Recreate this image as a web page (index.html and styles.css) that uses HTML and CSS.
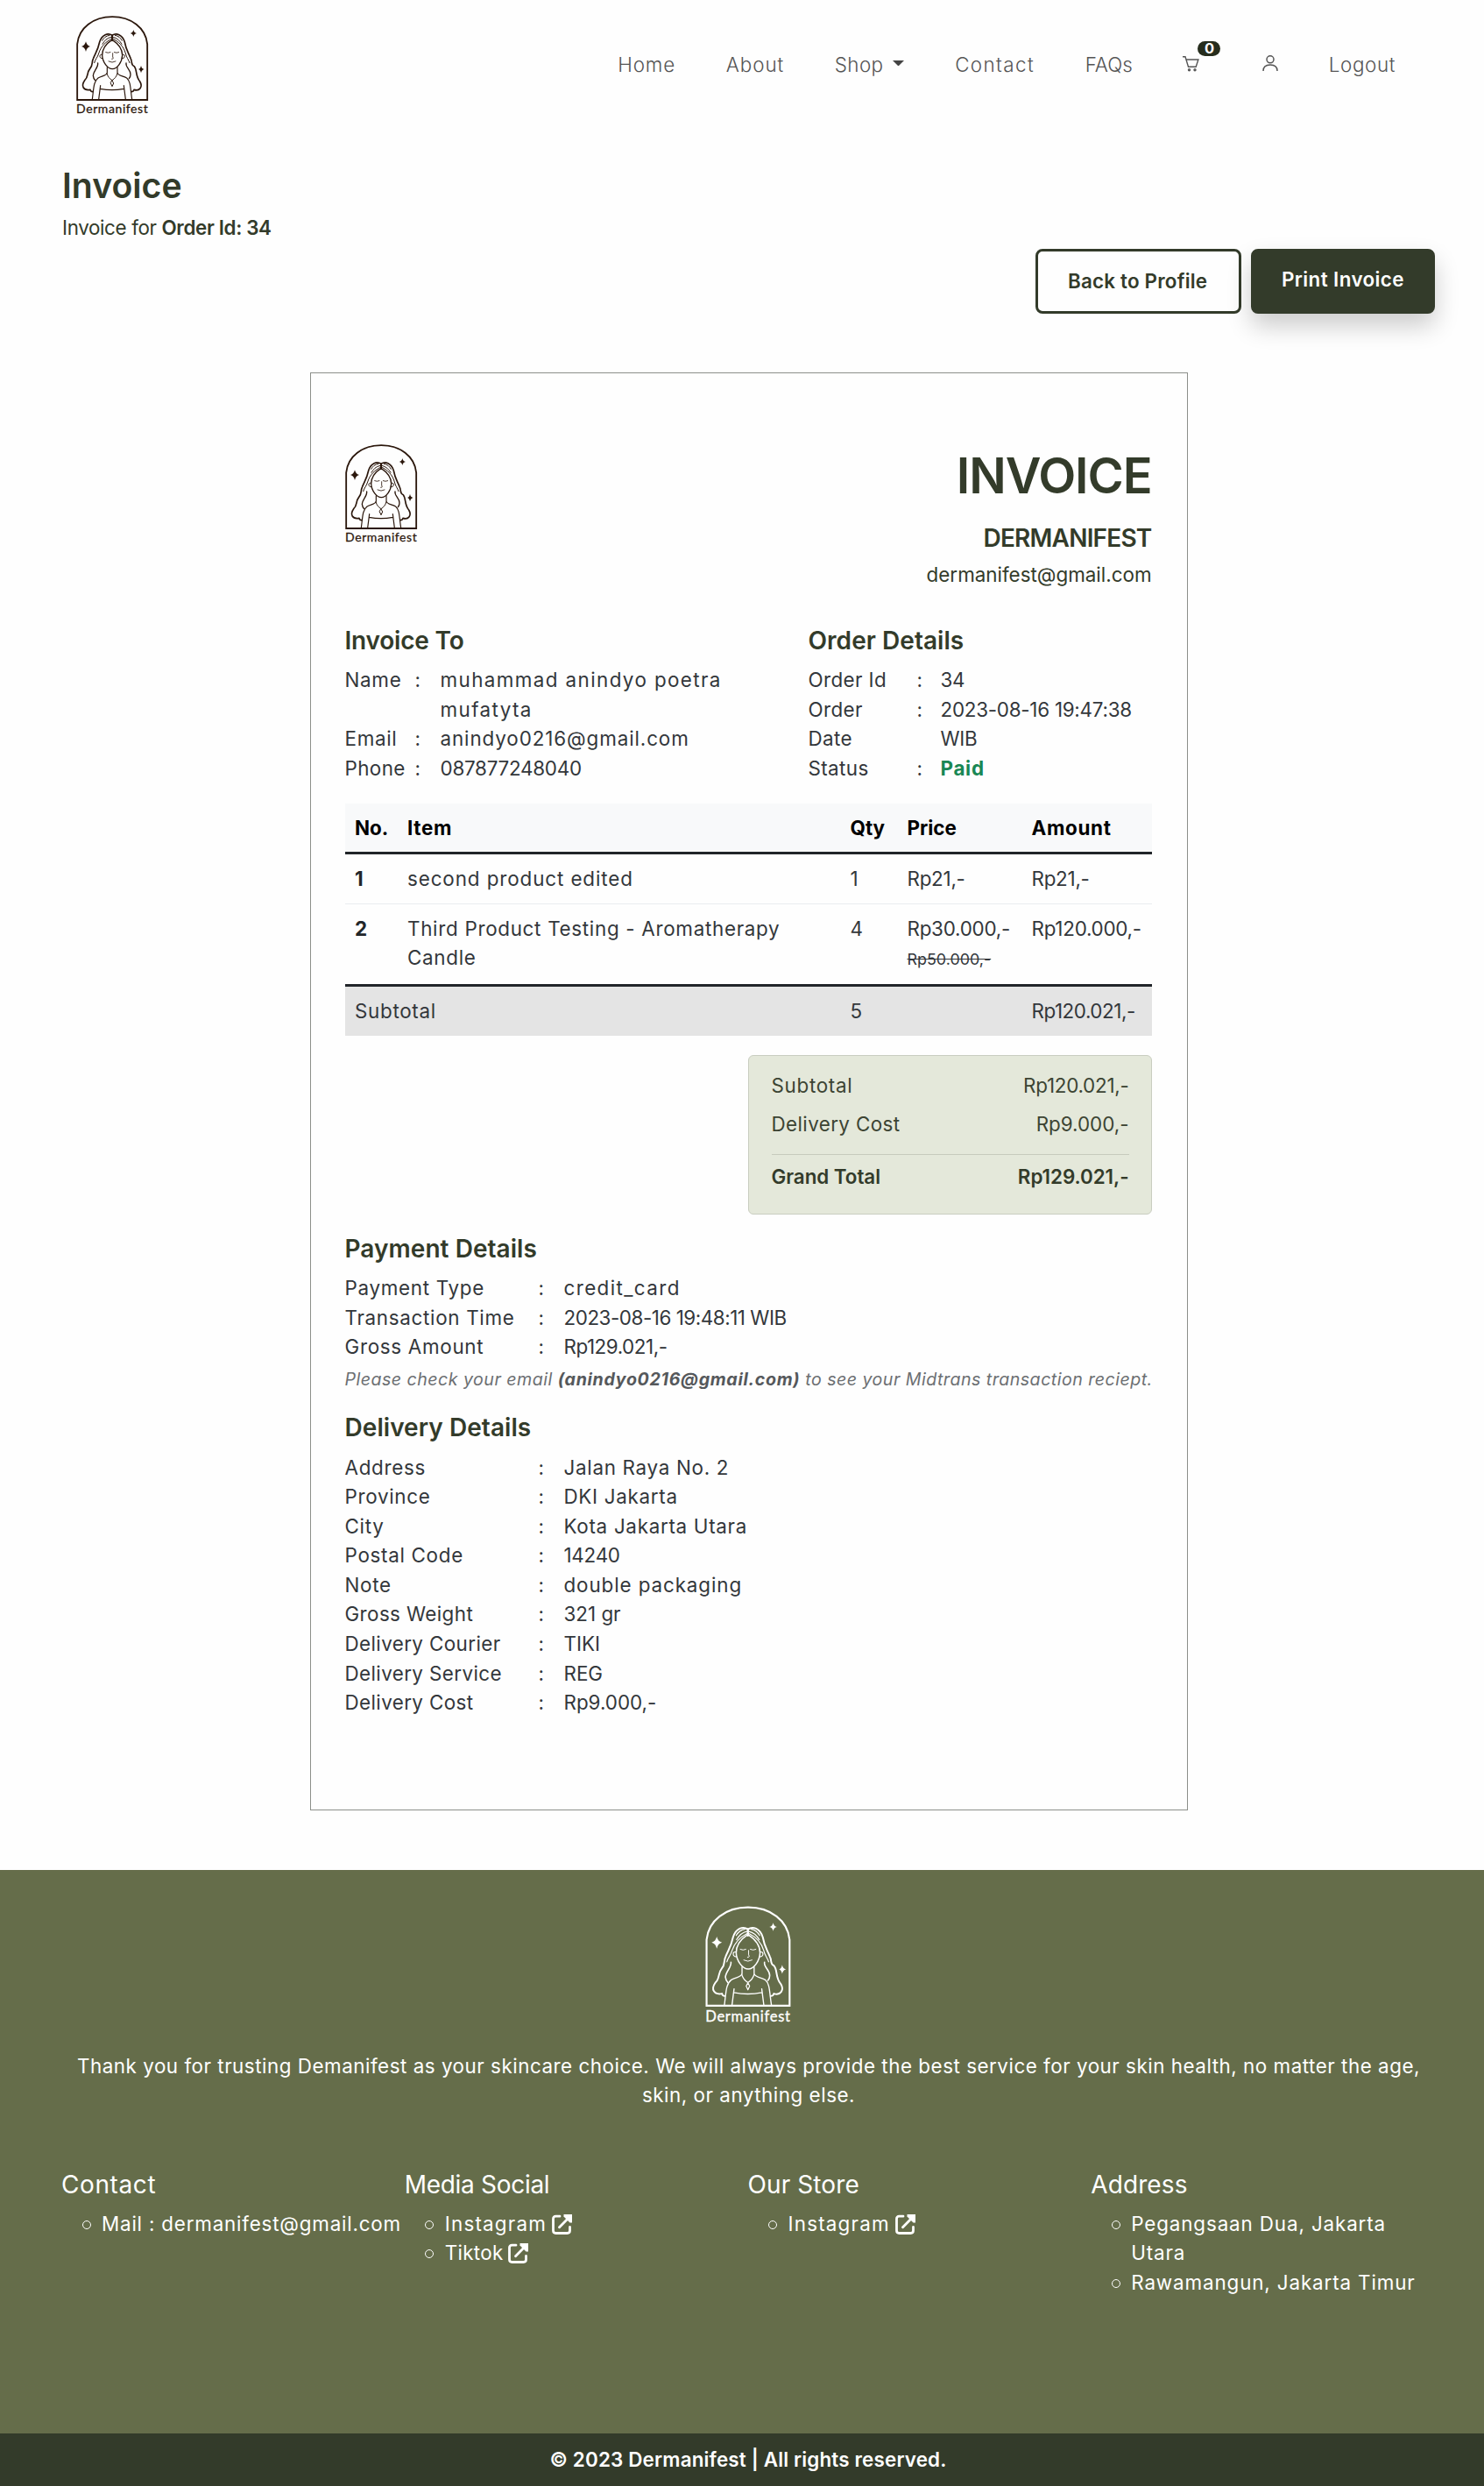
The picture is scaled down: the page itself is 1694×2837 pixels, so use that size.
FILE: index.html
```html
<!DOCTYPE html>
<html lang="en">
<head>
<meta charset="utf-8">
<title>Invoice - Dermanifest</title>
<link rel="stylesheet" href="styles.css">
</head>
<body>
<svg class="defs" width="0" height="0" aria-hidden="true">
  <symbol id="logo" viewBox="80 52 252 345">
    <g fill="none" stroke="currentColor" stroke-linecap="round" stroke-linejoin="round">
      <path stroke-width="5.500" stroke-linejoin="miter" d="M86.500 343V152C92 96 142 58.500 206.500 58.500S321 96 326.500 152V343Z"/>
      <path stroke-width="5" d="M206 122C192 112 171 119 163 145C157 173 150 180 142 200C134 216 142 222 130 236C118 250 126 264 112 276C98 296 108 312 131 308C132 312 135 315 139 315"/>
      <path stroke-width="5" d="M206 122C220 112 241 119 249 145C254 173 262 182 269 200C277 214 268 222 282 228C292 240 285 262 301 280C312 298 300 314 281 308C280 312 277 315 272 315"/>
      <path stroke-width="4" d="M206 137C186 150 172 166 172 190C173 214 191 237 207 237S240 214 241 190C241 166 226 150 206 137"/>
      <path stroke-width="6" d="M206 122V140"/>
      <path stroke-width="3" d="M203 128C188 131 180 140 173 152M204 134C186 143 168 158 160 184C156 198 148 204 145 216M209 128C223 131 232 140 239 152M209 134C227 143 245 158 252 184C255 198 262 204 266 216M197 122C184 124 178 130 172 140M216 122C228 124 234 130 240 140"/>
      <path stroke-width="4" d="M157 217C159 232 142 244 141 260Q142 270 148 276M254 217C251 232 269 238 269 256Q269 264 264 270"/>
      <path stroke-width="3" d="M172 188C160 184 161 203 173 201M241 188C253 184 252 203 240 201"/>
      <path stroke-width="3.500" d="M189 231V250C188 260 172 260 158 268C142 280 143 304 138 341M224 231V250C225 260 241 260 256 268C270 280 268 304 274 341"/>
      <path stroke-width="3.500" d="M166 294L160 341M246 294L252 341M165 305Q206 313 246 305"/>
      <path stroke-width="3" d="M188 252C191 264 198 271 206 276C214 271 221 264 224 252M206 277L211 286L206 297L201 286Z"/>
      <path stroke-width="2.500" d="M184 180Q192 184 200 180M213 180Q221 184 229 180M208 183V196Q213 203 205 203M194 211Q206 218 218 211"/>
    </g>
    <path fill="currentColor" d="M116 143Q119 157 131 160Q119 163 116 178Q113 163 101 160Q113 157 116 143ZM279 103Q281 113 290 115Q281 117 279 127Q277 117 268 115Q277 113 279 103ZM305 225Q307 236 316 238Q307 240 305 251Q303 240 296 238Q303 236 305 225Z"/>
    <text x="83" y="389" textLength="246" font-family="Lato, sans-serif" font-size="42" font-weight="400" fill="currentColor" stroke="currentColor" stroke-width=".8">Dermanifest</text>
  </symbol>
  <symbol id="external" viewBox="0 0 23 23">
    <path fill="none" stroke="currentColor" stroke-width="2.800" stroke-linecap="round" d="M9 2.200H4.500Q1.500 2.200 1.500 5V18.500Q1.500 21.500 4.500 21.500H17.500Q20.500 21.500 20.500 18.500V14.500M8.500 14.800L19.500 3.500"/>
    <path fill="currentColor" d="M13.500 0H23V9.500H20.500L13.500 2.500Z"/>
  </symbol>
</svg>

<header class="navbar">
  <svg class="logo brand"><use href="#logo"/></svg>
  <nav class="menu">
    <a class="ls-wide">Home</a>
    <a class="ls-wide">About</a>
    <a class="ls-mid shop">Shop<i class="caret"></i></a>
    <a class="ls-wider">Contact</a>
    <a class="ls-none">FAQs</a>
    <a class="cart">
      <svg width="19" height="18" viewBox="0 0 19 18" fill="none" stroke="currentColor" stroke-width="1.400"><path d="M0 .8H3L6.500 12.200H15.200L17.900 4H4.200"/><circle cx="7.500" cy="15.800" r="1"/><circle cx="14" cy="15.800" r="1"/></svg>
      <span class="badge">0</span>
    </a>
    <a class="user"><svg width="18" height="18" viewBox="0 0 18 18" fill="none" stroke="currentColor" stroke-width="1.500"><circle cx="9" cy="4.800" r="4"/><path d="M1 18C1 13.500 4.200 11 9 11S17 13.500 17 18"/></svg></a>
    <a class="ls-mid">Logout</a>
  </nav>
</header>

<main class="container">
  <h1 class="page-title">Invoice</h1>
  <p class="page-sub">Invoice for <b>Order Id: 34</b></p>
  <div class="actions">
    <a class="btn btn-outline">Back to Profile</a>
    <a class="btn btn-solid">Print Invoice</a>
  </div>

  <section class="invoice">
    <div class="invoice-head">
      <svg class="logo"><use href="#logo"/></svg>
      <div class="issuer">
        <h2>INVOICE</h2>
        <h3>DERMANIFEST</h3>
        <p>dermanifest@gmail.com</p>
      </div>
    </div>

    <div class="parties">
      <div>
        <h4 class="ls-tight">Invoice To</h4>
        <dl class="rows rows-to">
          <dt>Name</dt><dd>:</dd><dd class="ls-wider">muhammad anindyo poetra mufatyta</dd>
          <dt>Email</dt><dd>:</dd><dd class="ls-wide">anindyo0216@gmail.com</dd>
          <dt class="ls-mid">Phone</dt><dd>:</dd><dd class="ls-num">087877248040</dd>
        </dl>
      </div>
      <div>
        <h4>Order Details</h4>
        <dl class="rows rows-order">
          <dt class="ls-mid">Order Id</dt><dd>:</dd><dd class="ls-num">34</dd>
          <dt class="ls-mid">Order Date</dt><dd>:</dd><dd class="ls-num">2023-08-16 19:47:38 WIB</dd>
          <dt class="ls-mid">Status</dt><dd>:</dd><dd class="paid">Paid</dd>
        </dl>
      </div>
    </div>

    <table class="items">
      <thead>
        <tr><th class="ls-none">No.</th><th>Item</th><th class="ls-none">Qty</th><th class="ls-none">Price</th><th>Amount</th></tr>
      </thead>
      <tbody>
        <tr><th>1</th><td class="ls-wide">second product edited</td><td>1</td><td class="ls-num">Rp21,-</td><td class="ls-num">Rp21,-</td></tr>
        <tr><th>2</th><td>Third Product Testing - Aromatherapy Candle</td><td>4</td><td class="ls-num">Rp30.000,-<br><s>Rp50.000,-</s></td><td class="ls-num">Rp120.000,-</td></tr>
      </tbody>
      <tfoot>
        <tr><td colspan="2">Subtotal</td><td>5</td><td></td><td class="ls-num2">Rp120.021,-</td></tr>
      </tfoot>
    </table>

    <div class="summary">
      <p><span>Subtotal</span><span class="ls-num">Rp120.021,-</span></p>
      <p><span class="ls-mid">Delivery Cost</span><span class="ls-none">Rp9.000,-</span></p>
      <p class="grand"><span>Grand Total</span><span>Rp129.021,-</span></p>
    </div>

    <h4>Payment Details</h4>
    <dl class="rows rows-wide">
      <dt>Payment Type</dt><dd>:</dd><dd class="ls-wider">credit_card</dd>
      <dt>Transaction Time</dt><dd>:</dd><dd class="ls-num2">2023-08-16 19:48:11 WIB</dd>
      <dt>Gross Amount</dt><dd>:</dd><dd class="ls-num2">Rp129.021,-</dd>
    </dl>
    <p class="note">Please check your email <b>(anindyo0216@gmail.com)</b> to see your Midtrans transaction reciept.</p>

    <h4 class="delivery-title">Delivery Details</h4>
    <dl class="rows rows-wide">
      <dt>Address</dt><dd>:</dd><dd>Jalan Raya No. 2</dd>
      <dt>Province</dt><dd>:</dd><dd>DKI Jakarta</dd>
      <dt>City</dt><dd>:</dd><dd>Kota Jakarta Utara</dd>
      <dt>Postal Code</dt><dd>:</dd><dd class="ls-num">14240</dd>
      <dt>Note</dt><dd>:</dd><dd class="ls-wide">double packaging</dd>
      <dt class="ls-mid">Gross Weight</dt><dd>:</dd><dd class="ls-none">321 gr</dd>
      <dt class="ls-mid">Delivery Courier</dt><dd>:</dd><dd class="ls-none">TIKI</dd>
      <dt class="ls-mid">Delivery Service</dt><dd>:</dd><dd class="ls-none">REG</dd>
      <dt class="ls-mid">Delivery Cost</dt><dd>:</dd><dd class="ls-none">Rp9.000,-</dd>
    </dl>
  </section>
</main>

<footer class="footer">
  <svg class="logo"><use href="#logo"/></svg>
  <p class="thanks">Thank you for trusting Demanifest as your skincare choice. We will always provide the best service for your skin health, no matter the age, skin, or anything else.</p>
  <div class="cols">
    <div>
      <h5 class="ls-mid">Contact</h5>
      <ul><li class="ls-mail">Mail : dermanifest@gmail.com</li></ul>
    </div>
    <div>
      <h5 class="ls-tight2">Media Social</h5>
      <ul><li class="ls-link">Instagram <svg class="ext"><use href="#external"/></svg></li><li class="ls-tiktok">Tiktok <svg class="ext"><use href="#external"/></svg></li></ul>
    </div>
    <div>
      <h5>Our Store</h5>
      <ul><li class="ls-link">Instagram <svg class="ext"><use href="#external"/></svg></li></ul>
    </div>
    <div>
      <h5 class="ls-none">Address</h5>
      <ul><li>Pegangsaan Dua, Jakarta Utara</li><li>Rawamangun, Jakarta Timur</li></ul>
    </div>
  </div>
</footer>
<div class="copyright">© 2023 Dermanifest | All rights reserved.</div>
</body>
</html>
```
FILE: styles.css
```css
* { box-sizing: border-box; }
body {
  margin: 0;
  background: #fefefe;
  color: #33373b;
  font: 400 22.4px/33.6px Inter, "Liberation Sans", sans-serif;
  letter-spacing: .7px;
}
h1, h2, h3, h4, h5, p, dl, dd, ul { margin: 0; padding: 0; }
.defs { position: absolute; }
.logo { display: block; width: 84px; height: 115px; color: #2b170c; }

.ls-none { letter-spacing: 0; }
.ls-mid { letter-spacing: .4px; }
.ls-wide { letter-spacing: .9px; }
.ls-wider { letter-spacing: 1.4px; }
.ls-num { letter-spacing: -.25px; }
.ls-num2 { letter-spacing: -.45px; }
.ls-mail { letter-spacing: .77px; }
.ls-link { letter-spacing: 1.15px; }
.ls-tiktok { letter-spacing: .3px; }

/* Navigation */
.navbar {
  display: flex;
  height: 150px;
  padding: 17px 101px 0 86px;
  justify-content: space-between;
  align-items: flex-start;
}
.menu { display: flex; gap: 57.700px; padding-top: 40px; font-weight: 300; color: #555; }
.menu svg { display: block; }
.menu .ls-mid:last-child { letter-spacing: .6px; }
.shop { display: flex; }
.caret {
  width: 13px;
  margin: 12px 0 0 11px;
  border: 6.5px solid transparent;
  border-top-color: #444;
  border-bottom: 0;
  height: 7px;
}
.cart { position: relative; width: 33px; padding-top: 7px; }
.user { padding-top: 6px; }
.badge {
  position: absolute;
  left: 17px;
  top: -10px;
  width: 26px;
  height: 17px;
  border-radius: 9px;
  background: #262d1d;
  color: #fff;
  font: 700 16.5px/17px Inter, sans-serif;
  letter-spacing: 0;
  text-align: center;
}

.container { padding: 38px 56px 0 71px; }
.page-title { font-size: 39.2px; line-height: 48px; font-weight: 600; letter-spacing: 0; color: #333b2a; }
.page-sub { margin-top: 7px; letter-spacing: -.36px; color: #333b2a; }
.page-sub b { font-weight: 600; }
.actions { display: flex; justify-content: flex-end; gap: 11px; margin-top: 7px; }
.btn {
  height: 74px;
  border-radius: 8px;
  border: 3px solid #333b2a;
  padding: 17px 34px 0;
  font-weight: 600;
  letter-spacing: .2px;
  white-space: nowrap;
  color: #333b2a;
}
.btn-outline { width: 235px; }
.btn-solid {
  width: 210px;
  padding: 15px 32px 0;
  background: #333b2a;
  color: #fff;
  letter-spacing: .4px;
  box-shadow: 0 14px 28px rgba(0, 0, 0, .2);
}

/* Invoice sheet */
.invoice {
  width: 1002px;
  height: 1641px;
  margin: 67px auto 68px;
  border: 1.400px solid #8c8f8a;
  padding: 80px 40px 0 39px;
}
.invoice-head { display: flex; justify-content: space-between; margin-left: -1px; }
.issuer { padding-top: 3px; text-align: right; color: #333b2a; }
.issuer h2 { font-size: 56px; line-height: 68px; font-weight: 600; letter-spacing: -1.1px; }
.issuer h3 { margin-top: 20px; font-size: 28px; line-height: 34px; font-weight: 600; letter-spacing: -.8px; }
.issuer p { margin-top: 8px; letter-spacing: 0; }
.invoice h4 { font-size: 28px; line-height: 33.6px; font-weight: 600; letter-spacing: .05px; color: #333b2a; }
.invoice h4.ls-tight { letter-spacing: -.2px; }
.parties { display: grid; grid-template-columns: 529px 1fr; margin-top: 43px; }
.rows { display: grid; margin-top: 10.500px; align-items: start; }
.rows-to { grid-template-columns: 80px 29px 340px; }
.rows-order { grid-template-columns: 124px 27px 1fr; }
.rows-order dt { width: 100px; }
.rows-wide { grid-template-columns: 221px 29px 1fr; }
.paid { font-weight: 700; color: #198754; }

.items { width: 921px; margin-top: 23px; border-collapse: collapse; table-layout: fixed; text-align: left; }
.items th, .items td { padding: 11px 0 11px 11.500px; vertical-align: top; white-space: nowrap; }
.items th { font-weight: 700; color: #22262a; }
.items th:nth-child(1) { width: 60px; }
.items th:nth-child(2) { width: 505.500px; }
.items th:nth-child(3) { width: 65px; }
.items th:nth-child(4) { width: 142px; }
.items thead th { background: #f8f9fa; color: #000; }
.items tbody td:nth-child(2) { white-space: normal; padding-right: 40px; }
.items tbody { border-top: 3px solid #212529; border-bottom: 3px solid #212529; }
.items tbody tr + tr { border-top: 1.400px solid #e9ecef; }
.items tfoot td { background: #e4e4e4; }
.items s { font-size: 17.9px; letter-spacing: 0; }

.summary {
  width: 461px;
  height: 182px;
  margin: 22.500px 0 23px auto;
  padding: 16.500px 25px 0 26px;
  background: #e4e8da;
  border: 1.400px solid #c9cdc0;
  border-radius: 6px;
  color: #3c4433;
}
.summary p { display: flex; justify-content: space-between; margin-bottom: 10.500px; }
.summary .grand { border-top: 1.500px solid #c6cabc; padding-top: 8px; font-weight: 600; letter-spacing: -.05px; color: #333b2a; margin-top: 17.500px; }

.note { margin-top: 6px; font-size: 19.6px; line-height: 29.4px; font-style: italic; white-space: nowrap; letter-spacing: .48px; color: #6c6f72; }
.note b { letter-spacing: .7px; color: #55585b; }
.invoice .delivery-title { margin-top: 24px; }

/* Footer */
.footer { height: 643px; padding: 40px 56px 0 71px; background: #656d4a; color: #fff; }
.footer .logo { width: 99.5px; height: 136.3px; margin: 0 auto; color: #fff; position: relative; left: -1px; }
.thanks { margin-top: 31px; text-align: center; letter-spacing: .52px; }
.cols { display: grid; grid-template-columns: repeat(4, 1fr); margin-top: 68px; }
.cols h5 { margin-left: -1px; font-size: 28px; line-height: 34px; font-weight: 400; letter-spacing: .1px; }
.cols h5.ls-mid { letter-spacing: .6px; }
.cols h5.ls-tight2 { letter-spacing: -.3px; }
.cols ul { margin-top: 10.500px; list-style: none; }
.cols li { position: relative; padding-left: 45px; letter-spacing: .87px; }
.cols li.ls-mail { letter-spacing: .8px; white-space: nowrap; }
.cols li.ls-link { letter-spacing: 1.2px; }
.cols li.ls-tiktok { letter-spacing: .3px; }
.cols li::before {
  content: "";
  position: absolute;
  left: 22.500px;
  top: 13px;
  width: 8px;
  height: 8px;
  border: 1.200px solid #fff;
  border-radius: 50%;
}
.ext { width: 23px; height: 23px; margin-left: -1.500px; vertical-align: -4px; }
.copyright { height: 60px; padding: 13px 0 0 14px; background: #333b2a; color: #fff; font-weight: 600; text-align: center; letter-spacing: .17px; }
```
